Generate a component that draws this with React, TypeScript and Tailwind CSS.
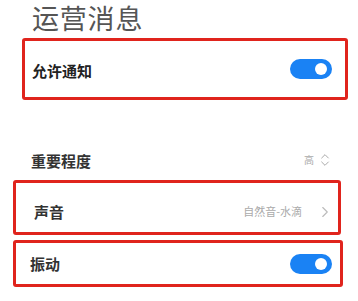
import { ChevronRight, ChevronsUpDown } from 'lucide-react';

const font = { fontFamily: '"Noto Sans CJK SC", "Noto Sans", sans-serif' };

function Toggle() {
  return (
    <div className="w-[42px] h-[20px] rounded-full bg-[#1a82f4] flex items-center justify-end pr-[5px]">
      <div className="w-[12px] h-[12px] rounded-full bg-white" />
    </div>
  );
}

export default function App() {
  return (
    <div className="w-[358px] h-[301px] bg-white overflow-hidden text-[#222]" style={font}>
      {/* Title */}
      <div className="pl-[32px] h-[36px] flex items-center text-[27px] leading-[36px] text-[#555] tracking-[0.8px]">运营消息</div>

      {/* Allow notifications */}
      <div className="mt-[2px] ml-[22px] w-[326px] h-[62px] border-[3px] border-[#e0241d] rounded-[3px] flex items-center justify-between pl-[7px] pr-[13px]">
        <span className="text-[15px] font-bold leading-none pt-[3px]">允许通知</span>
        <Toggle />
      </div>

      {/* Importance */}
      <div className="mt-[50px] h-[20px] flex items-center justify-between pl-[31px] pr-[25px]">
        <span className="text-[15px] font-bold leading-none text-[#333]">重要程度</span>
        <div className="flex items-center gap-[3px] text-[#aaa]">
          <span className="text-[10px] leading-none">高</span>
          <ChevronsUpDown size={16} strokeWidth={1.5} />
        </div>
      </div>

      {/* Sound */}
      <div className="mt-[10px] ml-[13px] w-[328px] h-[55px] border-[3px] border-[#e0241d] rounded-[3px] flex items-center justify-between pl-[18px] pr-[4px] pt-[8px]">
        <span className="text-[15px] font-bold leading-none text-[#333]">声音</span>
        <div className="flex items-center gap-[14px] text-[#aaa]">
          <span className="text-[11px] leading-none">自然音-水滴</span>
          <ChevronRight size={18} strokeWidth={1.5} className="text-[#bbb]" />
        </div>
      </div>

      {/* Vibration */}
      <div className="mt-[5px] ml-[13px] w-[330px] h-[47px] border-[3px] border-[#e0241d] rounded-[3px] flex items-center justify-between pl-[14px] pr-[8px]">
        <span className="text-[15px] font-bold leading-none text-[#333]">振动</span>
        <Toggle />
      </div>
    </div>
  );
}
